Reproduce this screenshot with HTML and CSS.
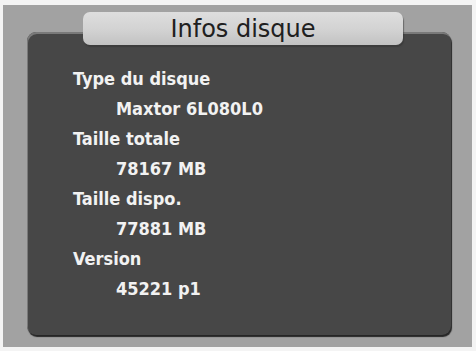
FILE: index.html
```html
<!DOCTYPE html>
<html lang="fr">
<head>
<meta charset="utf-8">
<title>Infos disque</title>
<link rel="stylesheet" href="styles.css">
</head>
<body>
<div class="screen">
  <div class="tab">Infos disque</div>
  <div class="panel">
    <div class="label">Type du disque</div>
    <div class="value">Maxtor 6L080L0</div>
    <div class="label">Taille totale</div>
    <div class="value">78167 MB</div>
    <div class="label">Taille dispo.</div>
    <div class="value">77881 MB</div>
    <div class="label">Version</div>
    <div class="value">45221 p1</div>
  </div>
</div>
</body>
</html>
```
FILE: styles.css
```css
html, body {
  margin: 0;
  padding: 0;
  background: #f4f4f4;
}
.screen {
  margin: 5px 4px 0 3px;
  height: 342px;
  box-sizing: border-box;
  padding-top: 7px;
  background: #a2a2a2;
  font-family: "DejaVu Sans", sans-serif;
}
.tab {
  position: relative;
  z-index: 1;
  width: 320px;
  height: 33px;
  margin: 0 0 -13px 80px;
  border-radius: 7px;
  background: linear-gradient(#dedede, #d2d2d2 55%, #c2c2c2);
  box-shadow: 1px 2px 1px rgba(50,50,50,0.5);
  color: #202020;
  font-size: 24px;
  line-height: 34px;
  text-align: center;
}
.panel {
  width: 424px;
  height: 303px;
  margin-left: 24px;
  box-sizing: border-box;
  padding: 32px 0 0 46px;
  border-radius: 9px;
  background: #474747;
  box-shadow: inset 1px 2px 0 #7a7a7a, 1px 2px 1px #262626;
  color: #f2f2f2;
  font-family: "DejaVu Sans Condensed", "DejaVu Sans", sans-serif;
  font-stretch: condensed;
  font-size: 18px;
  font-weight: bold;
  line-height: 30px;
}
.value {
  padding-left: 43px;
}
```
